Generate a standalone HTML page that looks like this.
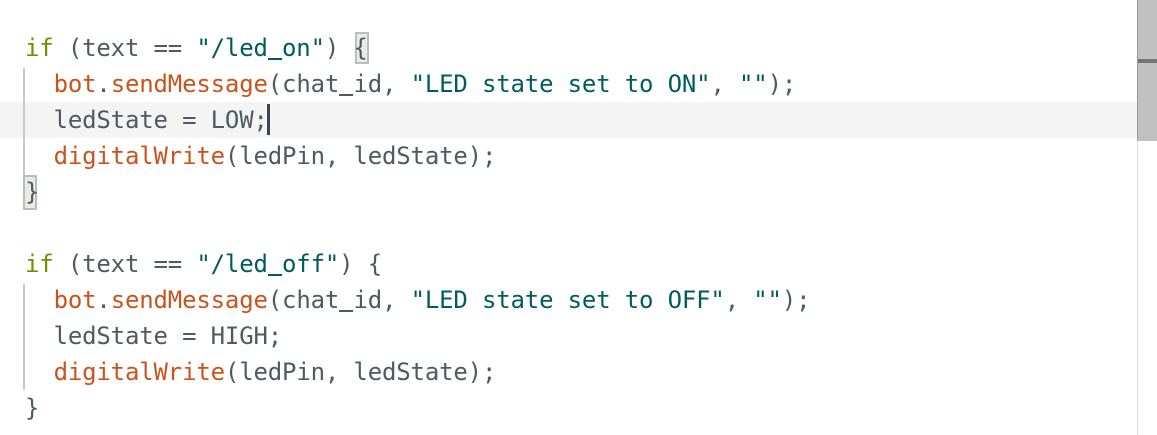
<!DOCTYPE html>
<html><head><style>
html,body{margin:0;padding:0;background:#fff;width:1157px;height:435px;overflow:hidden;position:relative}
.code{position:absolute;left:25px;top:30px;font-family:"DejaVu Sans Mono","Liberation Mono",monospace;font-size:24px;letter-spacing:-0.17px;line-height:36px;color:#4E5B61;white-space:pre}
.k{color:#728E00}.f{color:#C9541F}.s{color:#005C5F}
.u{display:inline-block;width:calc(1ch - 0.17px);height:1px;border-bottom:2px solid currentColor;vertical-align:-4px}
.hl{position:absolute;left:0;top:102px;width:1137px;height:36px;background:#f3f4f3}
.guide{position:absolute;left:23px;width:2px;background:#c8c8c8}
.box{position:absolute;background:#e8ece6;border:2px solid #bcbcbc;box-sizing:border-box}
.cursor{position:absolute;left:267px;top:104px;width:3px;height:31px;background:#3a474d}
.sb{position:absolute;left:1137px;top:0;width:20px;height:435px;border-left:1px solid #ddd;background:#fff}
.thumb{position:absolute;left:1137px;top:0;width:20px;height:141px;background:#c1c1c1;border-left:1px solid #999}
.mark{position:absolute;left:1138px;top:59px;width:19px;height:4px;background:#6f7777}
</style></head><body>
<div class="hl"></div>
<div class="guide" style="top:68px;height:108px"></div>
<div class="guide" style="top:284px;height:106px"></div>
<div class="box" style="left:355px;top:32px;width:14px;height:32px"></div>
<div class="box" style="left:23px;top:175px;width:14px;height:35px"></div>
<div class="code"><span class="k">if</span> (text == <span class="s">"/led<span class="u"></span>on"</span>) {
  <span class="f">bot</span>.<span class="f">sendMessage</span>(chat<span class="u"></span>id, <span class="s">"LED state set to ON"</span>, <span class="s">""</span>);
  ledState = LOW;
  <span class="f">digitalWrite</span>(ledPin, ledState);
}

<span class="k">if</span> (text == <span class="s">"/led<span class="u"></span>off"</span>) {
  <span class="f">bot</span>.<span class="f">sendMessage</span>(chat<span class="u"></span>id, <span class="s">"LED state set to OFF"</span>, <span class="s">""</span>);
  ledState = HIGH;
  <span class="f">digitalWrite</span>(ledPin, ledState);
}</div>
<div class="cursor"></div>
<div class="sb"></div>
<div class="thumb"></div>
<div class="mark"></div>
</body></html>
